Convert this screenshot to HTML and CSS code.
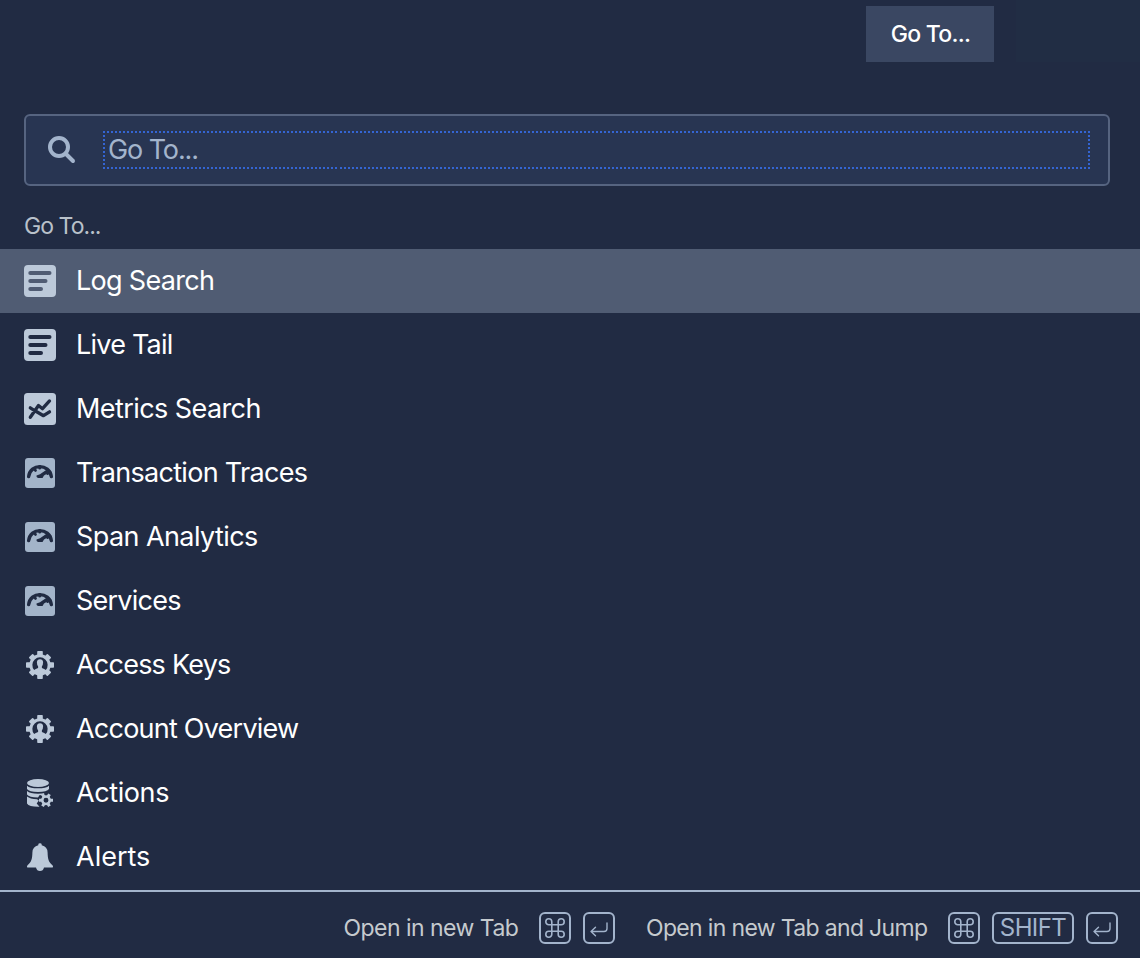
FILE: index.html
```html
<!DOCTYPE html>
<html lang="en">
<head>
<meta charset="utf-8">
<title>Go To...</title>
<link rel="stylesheet" href="styles.css">
</head>
<body>
<svg class="defs" aria-hidden="true">
  <symbol id="log" viewBox="0 0 32 32">
    <path fill="#bcc9d9" fill-rule="evenodd" d="M4 0H28Q32 0 32 4V28Q32 32 28 32H4Q0 32 0 28V4Q0 0 4 0ZM6.300 6A2 2 0 0 0 6.300 10H25.500A2 2 0 0 0 25.500 6ZM6.300 14A2 2 0 0 0 6.300 18H21.500A2 2 0 0 0 21.500 14ZM6.300 22A2 2 0 0 0 6.300 26H17A2 2 0 0 0 17 22Z"/>
  </symbol>
  <symbol id="metrics" viewBox="0 0 32 32">
    <rect width="32" height="32" rx="3.500" fill="#bcc9d9"/>
    <path class="cut" stroke-width="3.300" d="M6.300 24.300L14.500 12.500L18.500 15.700L25.500 7.900M6.300 14.800L11 17.800L19.500 22.700L25.500 18.800"/>
  </symbol>
  <symbol id="gauge" viewBox="0 0 32 32">
    <rect x="1" y="1" width="30" height="30" rx="3" fill="#a3b4c9"/>
    <path class="cut" stroke-width="3.300" d="M4.600 19.700C6.200 6.200 25.400 6.200 27.400 19.700"/>
    <path class="cut" stroke-width="2.800" d="M9.800 12L11.500 13.400M15.700 9.500V11.200M26 15L23.500 16.500"/>
    <path fill="#212b43" d="M12.500 18.500L16 17.200L22.500 12.800L25.500 15.300L20 18.600L18.500 21H14Q12 20 12.500 18.500Z"/>
  </symbol>
  <symbol id="admin" viewBox="0 0 32 32">
    <g fill="#bcc9d9">
      <circle cx="16" cy="16" r="10.700"/>
      <rect x="13.200" y="2" width="5.600" height="28" rx=".8"/>
      <rect x="2" y="13.200" width="28" height="5.600" rx=".8"/>
      <g transform="rotate(45 16 16)"><rect x="13.200" y="2.800" width="5.600" height="26.400" rx=".8"/><rect x="2.800" y="13.200" width="26.400" height="5.600" rx=".8"/></g>
    </g>
    <path fill="#212b43" d="M10.200 21A7.650 7.650 0 1 1 21.800 21Q20.600 19.600 17.900 18.900V17.200Q19.100 15.700 19.100 13.200Q18.900 10.200 16 10.200Q13.100 10.200 12.900 13.200Q12.900 15.700 14.100 17.200V18.900Q11.400 19.600 10.200 21Z"/>
  </symbol>
  <symbol id="actions" viewBox="0 0 32 32">
    <g fill="#bcc9d9">
      <ellipse cx="14" cy="6" rx="11" ry="4"/>
      <path d="M3 8.700Q6 11.300 14 11.300T25 8.700V12Q23 15 14 15T3 12ZM3 14Q6 16.700 14 16.700Q18 16.700 20.600 16L18.300 18.500L15.700 17.900L14 20.500Q5 20.300 3 17.500ZM3 19.500Q6 22 13 22.200L14.800 23.500L12.700 26.600L15.500 29.800Q5 30 3 26.500Z"/>
    </g>
    <g fill="none" stroke="#bcc9d9">
      <circle cx="22" cy="23.200" r="3.700" stroke-width="2.500"/>
      <path stroke-width="3" d="M25.700 23.200H29M23.850 26.400L25.500 29.260M20.150 26.400L18.500 29.260M18.300 23.200H15M20.150 20L18.500 17.140M23.850 20L25.500 17.140"/>
    </g>
  </symbol>
  <symbol id="bell" viewBox="0 0 32 32">
    <path fill="#bcc9d9" d="M14.300 4.300V3.500Q14.300 2.200 16 2.200T17.700 3.500V4.300Q23.400 5.500 23.600 11.500C23.800 18 24.400 20.700 28.500 24.300Q29.500 25.500 28.700 26.500H20Q19.200 30 16 30T12 26.500H3.300Q2.500 25.500 3.500 24.300C7.600 20.700 8.200 18 8.400 11.500Q8.600 5.500 14.300 4.300Z"/>
  </symbol>
  <symbol id="command" viewBox="0 0 20 20">
    <path fill="none" stroke="#a3b4cc" stroke-width="1.600" d="M6.800 3.800V16.200A3 3 0 1 1 3.800 13.200H16.200A3 3 0 1 1 13.200 16.200V3.800A3 3 0 1 1 16.200 6.800H3.800A3 3 0 1 1 6.800 3.800Z"/>
  </symbol>
  <symbol id="enter" viewBox="0 0 20 20">
    <path fill="none" stroke="#a3b4cc" stroke-width="1.400" stroke-linecap="round" stroke-linejoin="round" d="M18 3V8.500Q18 11.500 15 11.500H2M6.500 7.200L2 11.500L6.500 15.800"/>
  </symbol>
</svg>
<main class="panel">
  <header class="top"><button class="goto">Go To...</button><div class="patch"></div></header>
  <div class="search">
    <svg class="glass" viewBox="0 0 28 28"><circle cx="11" cy="11" r="9" fill="none" stroke="#a3b4cc" stroke-width="4"/><path d="M18 18L25 25" stroke="#a3b4cc" stroke-width="4" stroke-linecap="round"/></svg>
    <div class="field">Go To...</div>
  </div>
  <h2 class="heading">Go To...</h2>
  <ul class="list">
    <li class="item selected"><svg class="icon"><use href="#log"/></svg><span>Log Search</span></li>
    <li class="item"><svg class="icon"><use href="#log"/></svg><span class="tight">Live Tail</span></li>
    <li class="item"><svg class="icon"><use href="#metrics"/></svg><span class="open">Metrics Search</span></li>
    <li class="item"><svg class="icon"><use href="#gauge"/></svg><span>Transaction Traces</span></li>
    <li class="item"><svg class="icon"><use href="#gauge"/></svg><span class="open">Span Analytics</span></li>
    <li class="item"><svg class="icon"><use href="#gauge"/></svg><span class="tight">Services</span></li>
    <li class="item"><svg class="icon"><use href="#admin"/></svg><span class="tight">Access Keys</span></li>
    <li class="item"><svg class="icon"><use href="#admin"/></svg><span class="tight">Account Overview</span></li>
    <li class="item"><svg class="icon"><use href="#actions"/></svg><span class="wide">Actions</span></li>
    <li class="item"><svg class="icon"><use href="#bell"/></svg><span class="normal">Alerts</span></li>
  </ul>
  <footer class="footer">
    <div class="hint"><span class="label label-tab">Open in new Tab</span><kbd class="key"><svg class="glyph"><use href="#command"/></svg></kbd><kbd class="key"><svg class="glyph enter"><use href="#enter"/></svg></kbd></div>
    <div class="hint"><span class="label label-jump">Open in new Tab and Jump</span><kbd class="key"><svg class="glyph"><use href="#command"/></svg></kbd><kbd class="key shift">SHIFT</kbd><kbd class="key"><svg class="glyph enter"><use href="#enter"/></svg></kbd></div>
  </footer>
</main>
</body>
</html>
```

FILE: styles.css
```css
* { box-sizing: border-box; }
body { margin: 0; background: #212b43; color: #fff; font-family: Inter, "Liberation Sans", sans-serif; }
.defs { display: none; }
.cut { fill: none; stroke: #212b43; stroke-linecap: round; stroke-linejoin: round; }
.panel { width: 1140px; height: 958px; display: flex; flex-direction: column; overflow: hidden; }
.top { height: 114px; display: flex; justify-content: flex-end; gap: 22px; flex: none; }
.goto { width: 128px; height: 56px; margin-top: 6px; padding: 0 0 0 1px; border: 0; background: #3a4762; color: #fff; font: 500 23px/56px Inter, sans-serif; letter-spacing: -0.7px; white-space: nowrap; }
.patch { width: 124px; height: 62px; background: #212d44; }
.search { height: 72px; margin: 0 30px 0 24px; padding: 15px 18px 15px 21px; border: 2px solid #566480; border-radius: 6px; background: #283552; display: flex; flex: none; }
.glass { width: 28px; height: 28px; margin: 5px 27px 0 1px; flex: none; }
.field {
  flex: 1; height: 38px; padding-left: 5px; color: #a3b4cc; font-size: 27px; line-height: 38px; letter-spacing: -1.1px;
  --dots-x: repeating-linear-gradient(90deg, #3465d3 0 2px, transparent 2px 4px);
  --dots-y: repeating-linear-gradient(180deg, #3465d3 0 2px, transparent 2px 4px);
  background-image: var(--dots-x), var(--dots-x), var(--dots-x), var(--dots-x), var(--dots-y), var(--dots-y);
  background-size: 234px 2px, 750px 2px, 234px 2px, 750px 2px, 2px 38px, 2px 38px;
  background-position: left top, right top, left bottom, right bottom, left top, right top;
  background-repeat: no-repeat;
}
.heading { margin: 0; height: 63px; padding: 25px 24px 0; color: #b9c1ca; font-size: 23px; font-weight: 400; line-height: 30px; letter-spacing: -0.95px; flex: none; }
.list { margin: 0; padding: 0; list-style: none; height: 641px; flex: none; }
.item { height: 64px; padding: 0 24px; display: flex; align-items: center; gap: 20px; font-size: 27px; line-height: 64px; letter-spacing: -0.69px; white-space: nowrap; }
.tight { letter-spacing: -0.77px; }
.open { letter-spacing: -0.58px; }
.wide { letter-spacing: -0.4px; }
.normal { letter-spacing: 0; }
.selected { background: #505c73; }
.icon { width: 32px; height: 32px; flex: none; }
.footer { height: 68px; padding: 6px 22px 0 0; border-top: 2px solid #a3b4cc; display: flex; justify-content: flex-end; align-items: center; gap: 31px; color: #c5cace; font-size: 23px; flex: none; }
.hint { display: flex; align-items: center; gap: 12px; white-space: nowrap; }
.label-tab { width: 183.500px; letter-spacing: -0.53px; }
.label-jump { width: 290px; letter-spacing: -0.66px; }
.key { width: 32px; height: 32px; border: 2px solid #a3b4cc; border-radius: 6px; display: flex; align-items: center; justify-content: center; color: #a3b4cc; font: 24px/28px Inter, sans-serif; }
.shift { width: 82px; letter-spacing: -0.6px; }
.glyph { width: 20px; height: 20px; }
.enter { margin-top: 4px; }
```
